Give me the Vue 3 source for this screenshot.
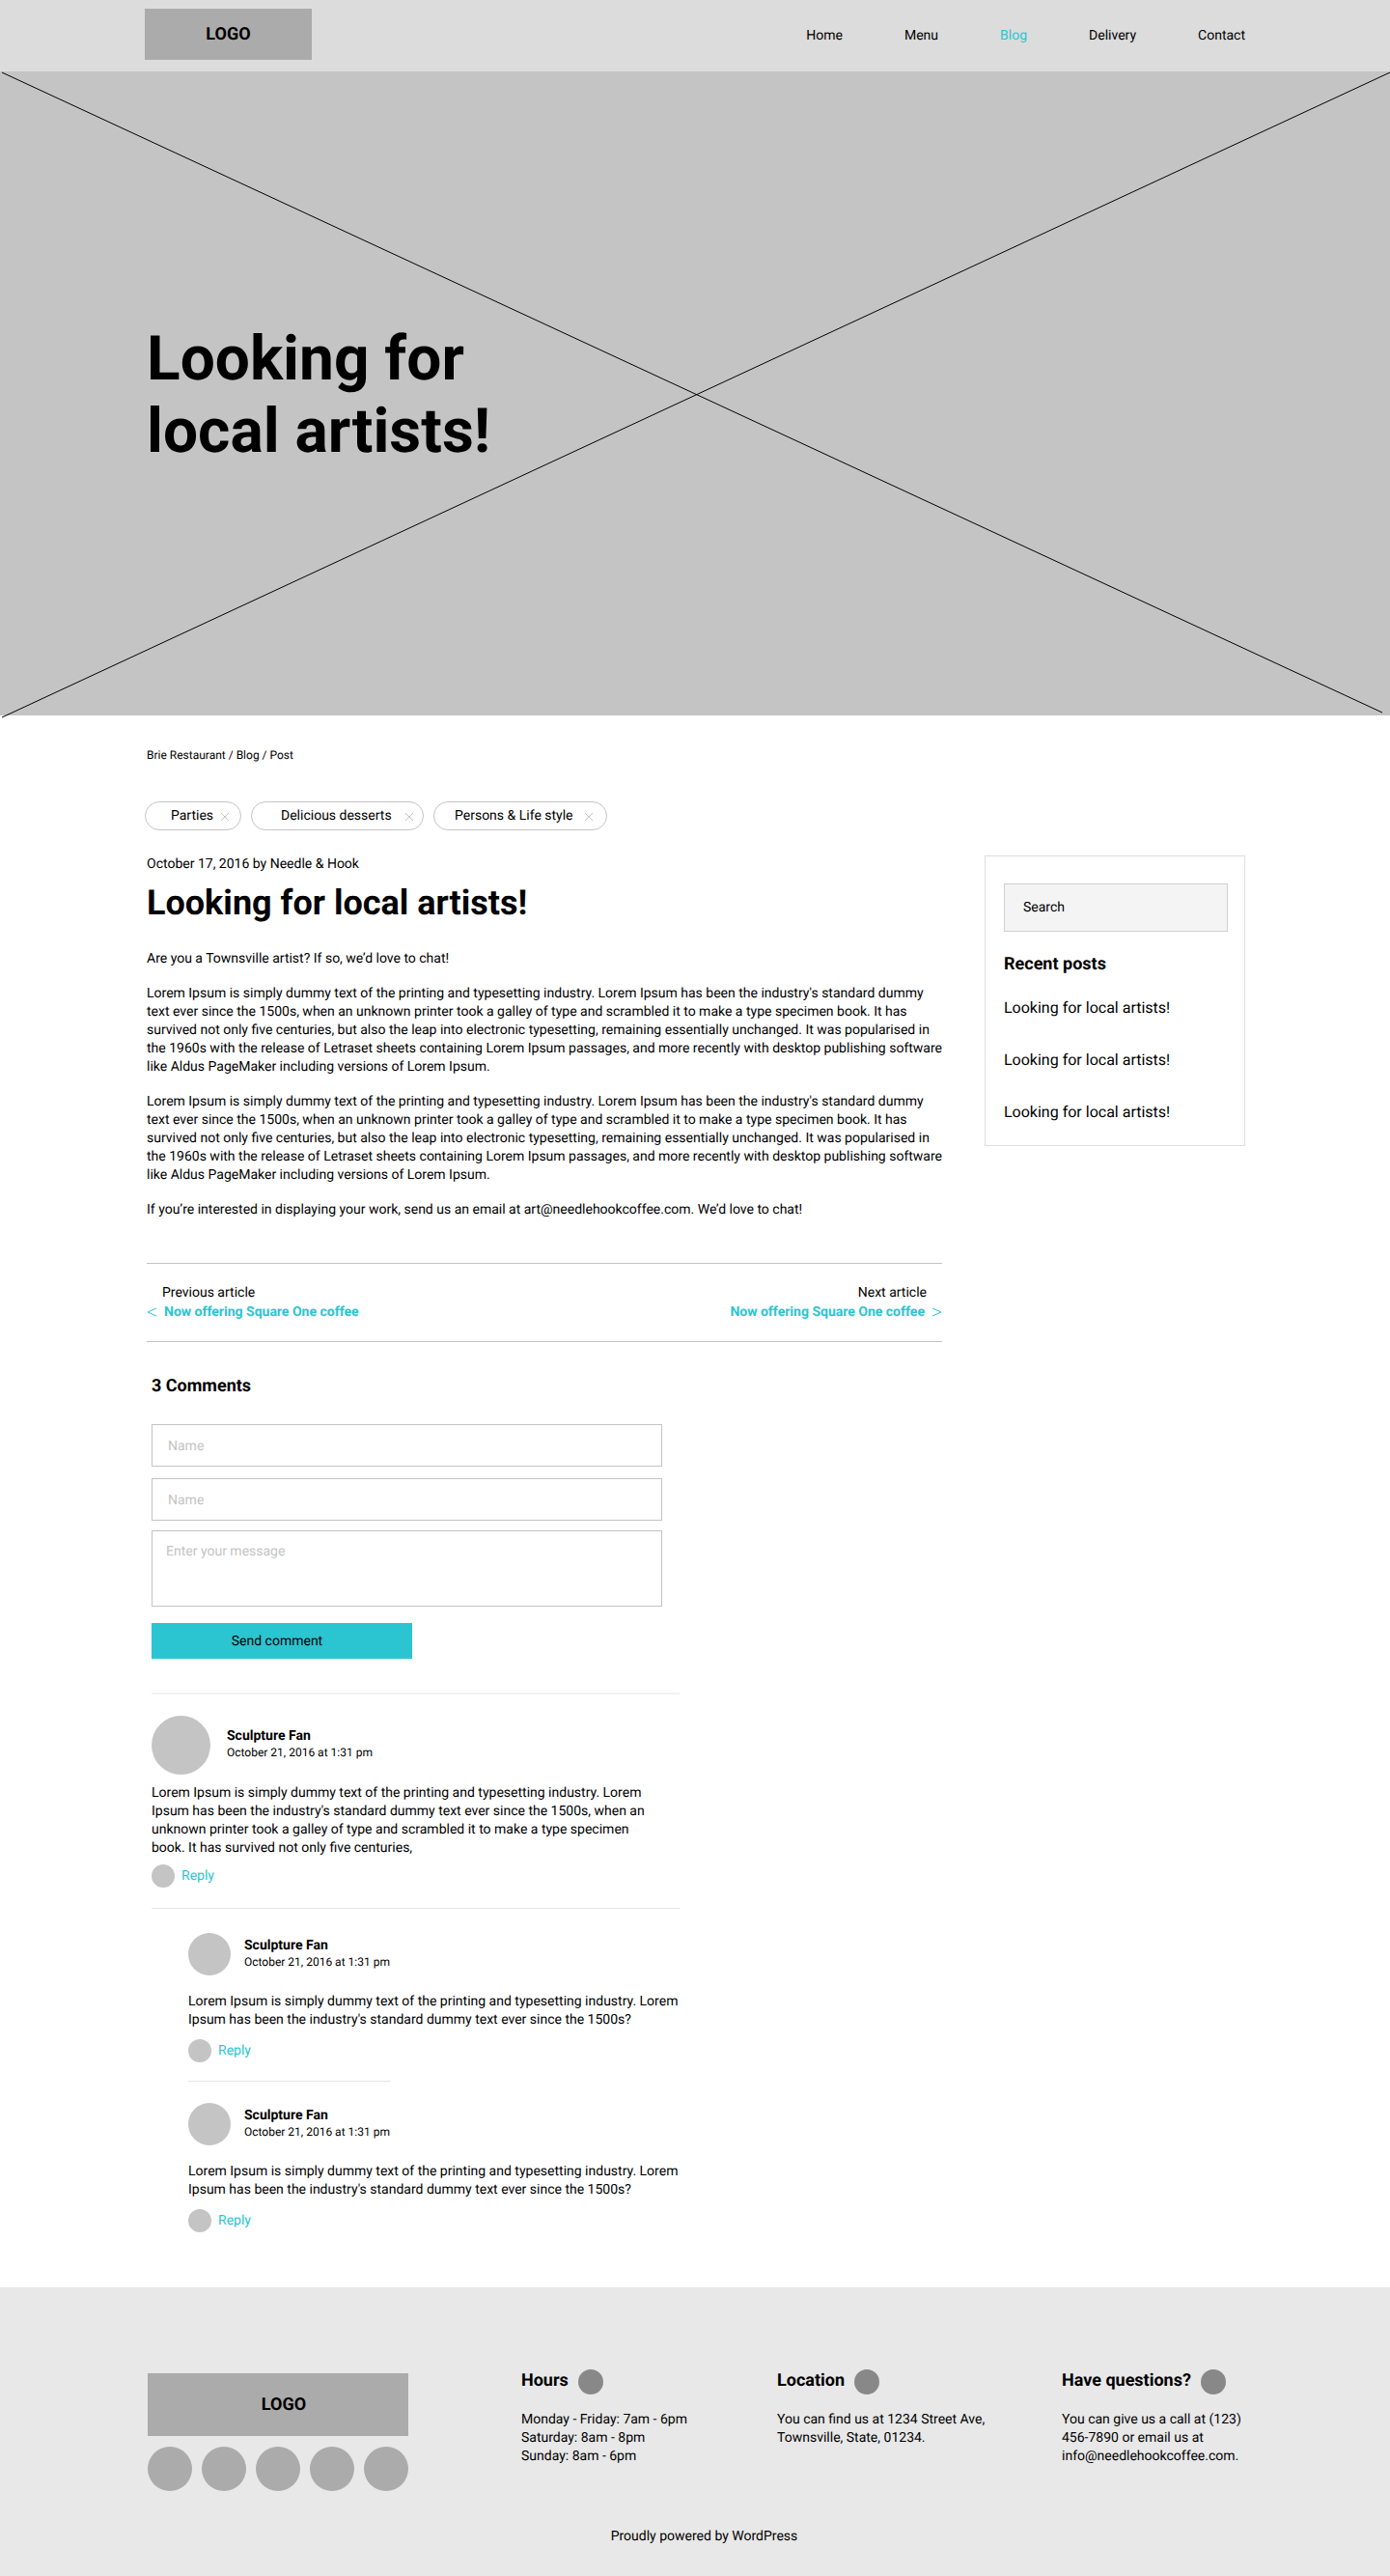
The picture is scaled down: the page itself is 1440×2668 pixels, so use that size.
<script setup>
import { ref } from 'vue'

const navLinks = [
  { label: 'Home' },
  { label: 'Menu' },
  { label: 'Blog', active: true },
  { label: 'Delivery' },
  { label: 'Contact' },
]

const tags = ref([
  { label: 'Parties', kind: 'short' },
  { label: 'Delicious desserts', kind: 'medium' },
  { label: 'Persons & Life style', kind: 'long' },
])

const removeTag = (label) => {
  tags.value = tags.value.filter((tag) => tag.label !== label)
}

const lorem =
  "Lorem Ipsum is simply dummy text of the printing and typesetting industry. Lorem Ipsum has been the industry's standard dummy text ever since the 1500s"

const paragraphs = [
  'Are you a Townsville artist? If so, we’d love to chat!',
  `${lorem}, when an unknown printer took a galley of type and scrambled it to make a type specimen book. It has survived not only five centuries, but also the leap into electronic typesetting, remaining essentially unchanged. It was popularised in the 1960s with the release of Letraset sheets containing Lorem Ipsum passages, and more recently with desktop publishing software like Aldus PageMaker including versions of Lorem Ipsum.`,
  `${lorem}, when an unknown printer took a galley of type and scrambled it to make a type specimen book. It has survived not only five centuries, but also the leap into electronic typesetting, remaining essentially unchanged. It was popularised in the 1960s with the release of Letraset sheets containing Lorem Ipsum passages, and more recently with desktop publishing software like Aldus PageMaker including versions of Lorem Ipsum.`,
  'If you’re interested in displaying your work, send us an email at art@needlehookcoffee.com. We’d love to chat!',
]

const comments = [
  {
    id: 1,
    reply: false,
    text: `${lorem}, when an unknown printer took a galley of type and scrambled it to make a type specimen book. It has survived not only five centuries,`,
  },
  { id: 2, reply: true, text: `${lorem}?` },
  { id: 3, reply: true, text: `${lorem}?` },
]

const recentPosts = [1, 2, 3]

const contacts = [
  { title: 'Hours', lines: ['Monday - Friday: 7am - 6pm', 'Saturday: 8am - 8pm', 'Sunday: 8am - 6pm'] },
  { title: 'Location', lines: ['You can find us at 1234 Street Ave,', 'Townsville, State, 01234.'] },
  { title: 'Have questions?', lines: ['You can give us a call at (123)', '456-7890 or email us at', 'info@needlehookcoffee.com.'] },
]
</script>

<template>
  <div class="page">
    <header class="topbar">
      <div class="container topbar-row">
        <a href="#" class="logo">LOGO</a>
        <nav class="menu">
          <a v-for="link in navLinks" :key="link.label" href="#" :class="{ active: link.active }">{{ link.label }}</a>
        </nav>
      </div>
    </header>

    <section class="hero">
      <svg class="hero-cross" viewBox="0 0 1440 667" preserveAspectRatio="none" aria-hidden="true">
        <path d="M2 1L1432 664M1440 1L2 669" fill="none" stroke="#000" vector-effect="non-scaling-stroke" />
      </svg>
      <div class="container">
        <h1>Looking for<br />local artists!</h1>
      </div>
    </section>

    <main class="container main">
      <nav class="breadcrumb">
        <a href="#">Brie Restaurant</a> / <a href="#">Blog</a> / <span>Post</span>
      </nav>

      <ul class="tags">
        <li v-for="tag in tags" :key="tag.label" class="tag" :class="tag.kind">
          <span>{{ tag.label }}</span>
          <button type="button" :aria-label="`Remove ${tag.label}`" @click="removeTag(tag.label)">
            <svg width="8" height="8" viewBox="0 0 8 8"><path d="M0 0L8 8M8 0L0 8" stroke="#c4c4c4" /></svg>
          </button>
        </li>
      </ul>

      <div class="columns">
        <div class="content">
          <article class="post">
            <p class="meta">October 17, 2016 by Needle &amp; Hook</p>
            <h2>Looking for local artists!</h2>
            <div class="body">
              <p v-for="(text, i) in paragraphs" :key="i">{{ text }}</p>
            </div>
          </article>

          <nav class="siblings">
            <div class="sibling">
              <span class="sibling-label">Previous article</span>
              <a href="#">
                <svg width="10" height="10" viewBox="0 0 10 10"><path d="M10 1L1 5L10 9" fill="none" stroke="#2ac5d1" /></svg>
                Now offering Square One coffee
              </a>
            </div>
            <div class="sibling next">
              <span class="sibling-label">Next article</span>
              <a href="#">
                Now offering Square One coffee
                <svg width="10" height="10" viewBox="0 0 10 10"><path d="M0 1L9 5L0 9" fill="none" stroke="#2ac5d1" /></svg>
              </a>
            </div>
          </nav>

          <section class="comments">
            <h3>3 Comments</h3>
            <form class="comment-form" @submit.prevent>
              <input type="text" placeholder="Name" aria-label="Name" />
              <input type="text" placeholder="Name" aria-label="Name" />
              <textarea placeholder="Enter your message" aria-label="Message"></textarea>
              <button type="submit">Send comment</button>
            </form>

            <div
              v-for="comment in comments"
              :key="comment.id"
              class="comment"
              :class="{ reply: comment.reply }"
            >
              <div class="author">
                <span class="avatar"></span>
                <div class="author-text">
                  <strong>Sculpture Fan</strong>
                  <time>October 21, 2016 at 1:31 pm</time>
                </div>
              </div>
              <p>{{ comment.text }}</p>
              <a href="#" class="reply-link"><span class="reply-icon"></span>Reply</a>
              <hr v-if="comment.id < comments.length" />
            </div>
          </section>
        </div>

        <aside class="sidebar">
          <input type="search" placeholder="Search" aria-label="Search" />
          <h3>Recent posts</h3>
          <ul>
            <li v-for="post in recentPosts" :key="post"><a href="#">Looking for local artists!</a></li>
          </ul>
        </aside>
      </div>
    </main>

    <footer class="footer">
      <div class="container footer-grid">
        <div class="brand">
          <a href="#" class="logo">LOGO</a>
          <div class="socials">
            <a v-for="n in 5" :key="n" href="#" :aria-label="`Social profile ${n}`"></a>
          </div>
        </div>
        <div v-for="item in contacts" :key="item.title" class="contact">
          <h3>{{ item.title }}<span class="dot"></span></h3>
          <p><template v-for="line in item.lines" :key="line">{{ line }}<br /></template></p>
        </div>
      </div>
      <p class="credit">Proudly powered by WordPress</p>
    </footer>
  </div>
</template>

<style>
body {
  margin: 0;
  background: #fff;
}
</style>

<style scoped>
.page {
  font-family: Roboto, "Liberation Sans", sans-serif;
  font-size: 14px;
  line-height: 19px;
  color: #000;
  text-rendering: geometricPrecision;
}

.page *,
.page *::before {
  box-sizing: border-box;
}

h1, h2, h3, p, ul {
  margin: 0;
  padding: 0;
}

ul {
  list-style: none;
}

a {
  color: inherit;
  text-decoration: none;
}

input, textarea, button {
  font: inherit;
  color: inherit;
  text-rendering: inherit;
  border-radius: 0;
}

h3 {
  font-size: 18px;
  line-height: 22px;
  font-weight: 700;
}

.container {
  width: 100%;
  max-width: 1140px;
  margin: 0 auto;
}

.logo {
  display: flex;
  align-items: center;
  justify-content: center;
  background: #ababab;
  font-size: 18px;
  font-weight: 700;
}

/* Header */
.topbar {
  background: #dcdcdc;
  padding: 9px 0 12px;
}

.topbar-row {
  display: flex;
  align-items: center;
  justify-content: space-between;
}

.topbar .logo {
  width: 173px;
  height: 53px;
}

.menu {
  display: flex;
  gap: 64px;
  padding-top: 3px;
}

.active {
  color: #2ac5d1;
}

/* Hero */
.hero {
  position: relative;
  display: flex;
  align-items: center;
  min-height: 667px;
  background: #c4c4c4;
}

.hero-cross {
  position: absolute;
  inset: 0;
  width: 100%;
  height: 100%;
  overflow: visible;
}

.hero h1 {
  position: relative;
  padding: 2px 0 0 2px;
  font-size: 64px;
  line-height: 75px;
  font-weight: 700;
}

/* Main */
.main {
  padding: 34px 0 57px;
}

.breadcrumb {
  padding-left: 2px;
  font-size: 12px;
  line-height: 14px;
}

.tags {
  display: flex;
  gap: 10px;
  margin: 41px 0 26px;
}

.tag {
  display: flex;
  align-items: center;
  justify-content: space-between;
  height: 30px;
  border: 1px solid #c4c4c4;
  border-radius: 15px;
}

.tag button {
  display: flex;
  padding: 0;
  border: 0;
  background: none;
  cursor: pointer;
}

.tag.short {
  width: 100px;
  padding: 1px 12px 0 26px;
}

.tag.medium {
  width: 179px;
  padding: 1px 10px 0 30px;
}

.tag.long {
  width: 180px;
  padding: 1px 14px 0 21px;
}

.columns {
  display: flex;
  align-items: flex-start;
  justify-content: space-between;
  gap: 40px;
}

.content {
  flex: 0 1 826px;
  padding-left: 2px;
}

.post h2 {
  margin: 9px 0 28px;
  font-size: 36px;
  line-height: 42px;
  font-weight: 700;
}

.body {
  display: flex;
  flex-direction: column;
  gap: 17px;
  margin-right: -4px;
}

.siblings {
  display: flex;
  justify-content: space-between;
  margin: 45px 0 35px;
  padding: 20px 0;
  border: solid #c4c4c4;
  border-width: 1px 0;
  line-height: 20px;
}

.sibling {
  display: flex;
  flex-direction: column;
}

.sibling a {
  display: flex;
  align-items: center;
  gap: 8px;
  color: #2ac5d1;
  font-weight: 700;
}

.sibling-label {
  padding: 0 16px;
}

.next {
  align-items: flex-end;
}

/* Comments */
.comments {
  max-width: 552px;
  padding-left: 5px;
}

.comment-form {
  display: flex;
  flex-direction: column;
  max-width: 529px;
  margin-top: 28px;
}

.comment-form input,
.comment-form textarea {
  width: 100%;
  border: 1px solid #c4c4c4;
  background: #fff;
}

.comment-form input {
  height: 44px;
  padding: 1px 16px 0;
}

.comment-form input + input {
  margin: 12px 0 10px;
}

.comment-form textarea {
  height: 79px;
  padding: 12px 14px;
  resize: none;
}

.comment-form ::placeholder {
  color: #c4c4c4;
  opacity: 1;
}

.comment-form button {
  width: 270px;
  height: 37px;
  margin-top: 17px;
  padding: 2px 10px 0 0;
  border: 0;
  background: #2ac5d1;
}

.comment-form + .comment {
  margin-top: 35px;
  padding-top: 22px;
  border-top: 2px solid #f2f2f2;
}

.author {
  display: flex;
  align-items: flex-start;
  gap: 17px;
}

.avatar {
  flex: none;
  width: 61px;
  height: 61px;
  border-radius: 50%;
  background: #c4c4c4;
}

.author-text {
  display: flex;
  flex-direction: column;
  padding-top: 12px;
}

.author-text strong {
  line-height: 18px;
}

.author-text time {
  font-size: 12px;
  line-height: 16px;
}

.comment p {
  max-width: 529px;
  margin: 10px 0 7px;
}

.reply-link {
  display: inline-flex;
  align-items: center;
  gap: 7px;
  color: #2ac5d1;
  vertical-align: top;
}

.reply-icon {
  width: 24px;
  height: 24px;
  border-radius: 50%;
  background: #c4c4c4;
}

.comment hr {
  height: 1px;
  margin: 21px 0 25px;
  border: 0;
  background: #e5e5e5;
}

.reply {
  padding-left: 38px;
}

.reply .author {
  gap: 14px;
}

.reply .avatar {
  width: 44px;
  height: 44px;
}

.reply .author-text {
  padding-top: 4px;
}

.reply p {
  margin: 18px 0 10px;
}

.reply hr {
  width: 209px;
  margin: 19px 0 22px;
}

/* Sidebar */
.sidebar {
  flex: 0 0 270px;
  padding: 28px 17px 23px 19px;
  border: 1px solid #dedede;
}

.sidebar input {
  width: 100%;
  height: 50px;
  padding: 0 19px;
  border: 1px solid #d0d0d0;
  background: #f4f4f4;
  appearance: none;
}

.sidebar input::placeholder {
  color: #000;
  opacity: 1;
}

.sidebar h3 {
  margin: 23px 0;
}

.sidebar ul {
  display: flex;
  flex-direction: column;
  gap: 32px;
  font-size: 16px;
  line-height: 22px;
}

/* Footer */
.footer {
  padding: 85px 0 31px;
  background: #e8e8e8;
}

.footer-grid {
  display: grid;
  grid-template-columns: 387px 265px 295px 1fr;
  padding-left: 3px;
}

.brand {
  width: 270px;
  padding-top: 4px;
}

.brand .logo {
  height: 65px;
  padding-left: 12px;
}

.socials {
  display: flex;
  justify-content: space-between;
  margin-top: 11px;
}

.socials a {
  width: 46px;
  height: 46px;
  border-radius: 50%;
  background: #ababab;
}

.contact h3 {
  display: flex;
  gap: 10px;
  margin-bottom: 17px;
  line-height: 24px;
}

.dot {
  width: 26px;
  height: 26px;
  border-radius: 50%;
  background: #888;
}

.credit {
  margin-top: 38px;
  padding-left: 19px;
  text-align: center;
}
</style>
